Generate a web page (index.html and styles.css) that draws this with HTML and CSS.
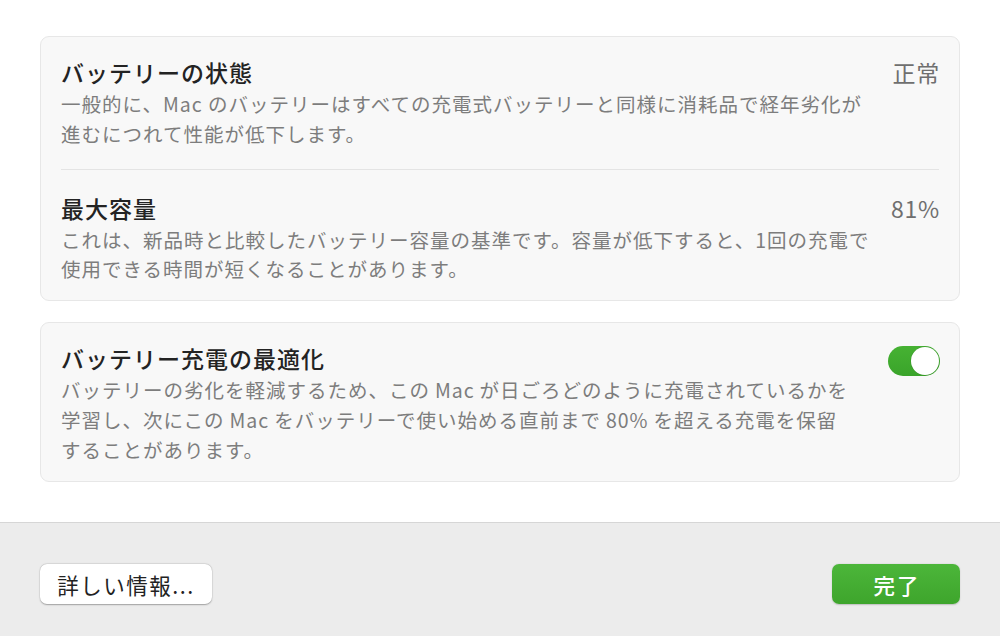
FILE: index.html
```html
<!DOCTYPE html>
<html lang="ja">
<head>
<meta charset="utf-8">
<link rel="stylesheet" href="styles.css">
</head>
<body>
<div class="window">
  <main class="content">
    <section class="card">
      <div class="row">
        <div class="text">
          <div class="title">バッテリーの状態</div>
          <div class="desc">一般的に、Mac のバッテリーはすべての充電式バッテリーと同様に消耗品で経年劣化が<br>進むにつれて性能が低下します。</div>
        </div>
        <div class="value">正常</div>
      </div>
      <div class="divider"></div>
      <div class="row">
        <div class="text">
          <div class="title">最大容量</div>
          <div class="desc">これは、新品時と比較したバッテリー容量の基準です。容量が低下すると、1回の充電で<br>使用できる時間が短くなることがあります。</div>
        </div>
        <div class="value">81%</div>
      </div>
    </section>
    <section class="card">
      <div class="row">
        <div class="text">
          <div class="title">バッテリー充電の最適化</div>
          <div class="desc">バッテリーの劣化を軽減するため、この&#8201;Mac&#8201;が日ごろどのように充電されているかを<br>学習し、次にこの&#8201;Mac&#8201;をバッテリーで使い始める直前まで&#8201;80%&#8201;を超える充電を保留<br>することがあります。</div>
        </div>
        <div class="toggle"><span class="knob"></span></div>
      </div>
    </section>
  </main>
  <footer class="footer">
    <button class="btn btn-secondary">詳しい情報...</button>
    <button class="btn btn-primary">完了</button>
  </footer>
</div>
</body>
</html>
```
FILE: styles.css
```css
html, body {
  margin: 0;
  padding: 0;
  background: #ffffff;
}
body {
  width: 1000px;
  height: 636px;
  overflow: hidden;
  font-family: "Noto Sans CJK JP", "Noto Sans", "Liberation Sans", sans-serif;
}
.window {
  display: flex;
  flex-direction: column;
  height: 636px;
}
.content {
  flex: 0 0 auto;
  height: 486px;
  padding: 36px 40px 0;
  display: flex;
  flex-direction: column;
  gap: 21px;
}
.card {
  background: #f8f8f8;
  border: 1px solid #e7e7e7;
  border-radius: 9px;
  padding: 0 20px;
}
.row {
  display: flex;
  align-items: flex-start;
  gap: 16px;
  padding: 19px 0 16px;
}
.row:first-child:not(:last-child) {
  padding-bottom: 20px;
}
.divider + .row {
  padding-top: 22px;
}
.text {
  flex: 1 1 auto;
  min-width: 0;
}
.title {
  font-size: 23px;
  line-height: 32px;
  font-weight: 500;
  color: #232323;
  letter-spacing: 1px;
}
.desc {
  font-size: 19.5px;
  line-height: 29.8px;
  color: #7d7d7d;
  margin-top: 1px;
  white-space: nowrap;
  letter-spacing: 1px;
}
.value {
  flex: 0 0 auto;
  font-size: 23px;
  line-height: 32px;
  color: #6f6f6f;
  letter-spacing: 0.8px;
  margin-right: -1px;
}
.divider {
  height: 1px;
  background: #e4e4e4;
}
.toggle {
  width: 52px;
  height: 30px;
  border-radius: 15px;
  background: linear-gradient(#46b233, #3aa42a);
  margin-top: 4px;
  margin-right: -1px;
  position: relative;
  flex: 0 0 auto;
}
.knob {
  position: absolute;
  right: 1px;
  top: 1px;
  width: 28px;
  height: 28px;
  border-radius: 50%;
  background: #ffffff;
  box-shadow: 0 0 0 0.5px rgba(0,0,0,0.15);
}
.footer {
  flex: 1;
  background: #ececec;
  border-top: 1px solid #d6d6d6;
  display: flex;
  justify-content: space-between;
  align-items: flex-start;
  padding: 41px 40px 0;
}
.btn {
  height: 40px;
  border: none;
  border-radius: 7px;
  font-family: "Noto Sans CJK JP", "Noto Sans", "Liberation Sans", sans-serif;
  font-size: 21.5px;
  padding: 0;
  cursor: default;
}
.btn-secondary {
  width: 172px;
  background: #ffffff;
  color: #222222;
  box-shadow: 0 0.5px 1.5px rgba(0,0,0,0.3), 0 0 0 0.5px rgba(0,0,0,0.06);
  letter-spacing: 1.5px;
}
.btn-primary {
  width: 128px;
  background: linear-gradient(#4cb63a, #3ea52c);
  color: #ffffff;
  font-weight: 500;
  box-shadow: 0 0.5px 1.5px rgba(0,0,0,0.2);
  letter-spacing: 2px;
  text-indent: 2px;
}
```
